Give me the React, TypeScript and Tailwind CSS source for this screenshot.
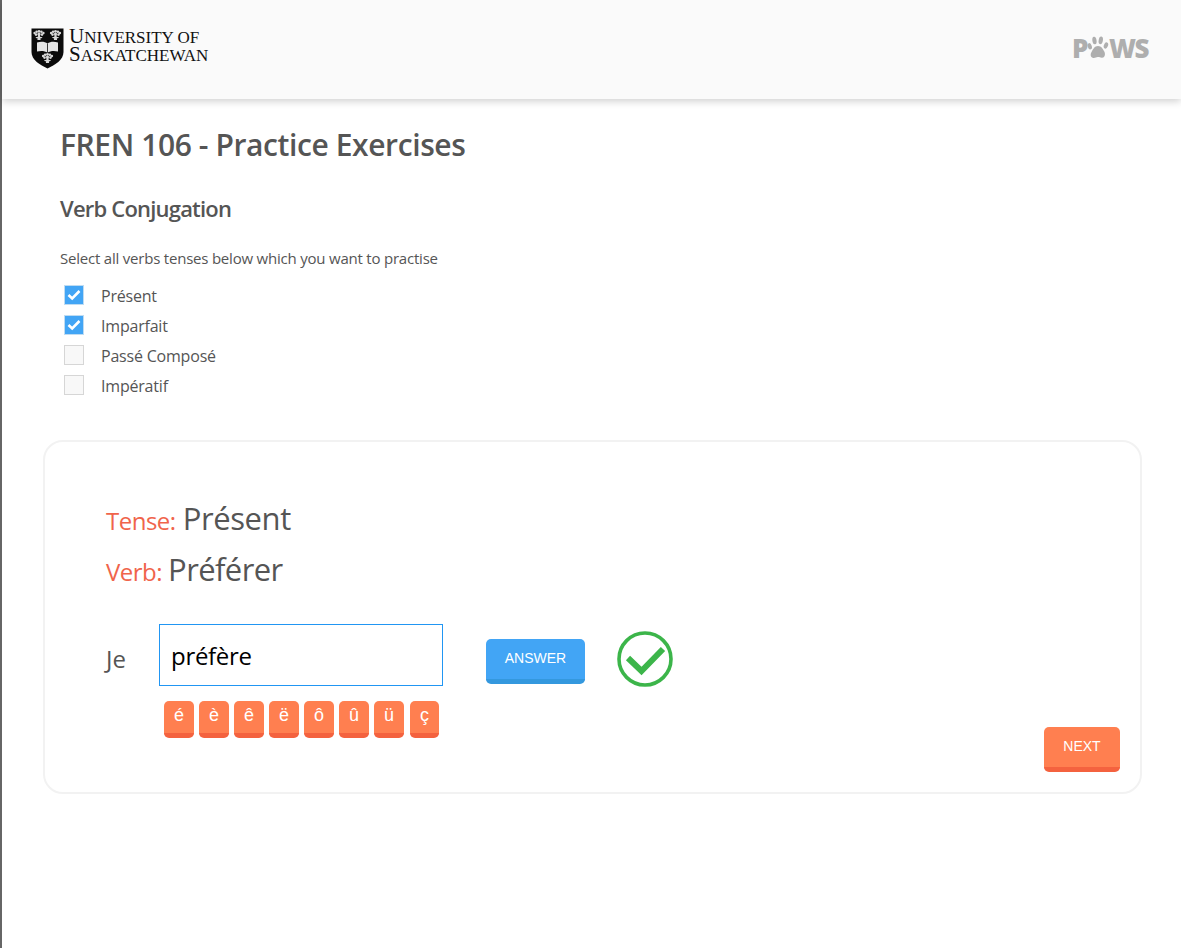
const tenses = [
  { label: "Présent", checked: true },
  { label: "Imparfait", checked: true },
  { label: "Passé Composé", checked: false },
  { label: "Impératif", checked: false },
];

const accents = ["é", "è", "ê", "ë", "ô", "û", "ü", "ç"];

function Wheat({ x, y }: { x: number; y: number }) {
  return (
    <g transform={`translate(${x} ${y})`} fill="#d8d8d8">
      <path d="M-1 1 L1 1 L1.6 6 L-1.6 6 Z" />
      <circle cx="-4.4" cy="-1" r="1.2" />
      <circle cx="-2.4" cy="-2.2" r="1.3" />
      <circle cx="0" cy="-2.7" r="1.4" />
      <circle cx="2.4" cy="-2.2" r="1.3" />
      <circle cx="4.4" cy="-1" r="1.2" />
      <circle cx="-3" cy="0.6" r="1.3" />
      <circle cx="0" cy="0" r="1.6" />
      <circle cx="3" cy="0.6" r="1.3" />
      <path d="M-3.5 3 L3.5 3 L2.5 4.2 L-2.5 4.2 Z" />
    </g>
  );
}

function Crest() {
  return (
    <svg width="33" height="41" viewBox="0 0 33 41">
      <path d="M0.5 0.5 H32.5 V24 C32.5 32 24 37 16.5 40.5 C9 37 0.5 32 0.5 24 Z" fill="#0b0b0b" />
      <Wheat x={8} y={6} />
      <Wheat x={24.5} y={6} />
      <Wheat x={16.5} y={29} />
      <path d="M6 14.5 C10 13 14 13.5 16.5 15.5 C19 13.5 23 13 27 14.5 V23.5 C23 22.5 19 23 16.5 24.5 C14 23 10 22.5 6 23.5 Z" fill="#e4e4e4" />
      <path d="M16.5 15.5 V24.5" stroke="#0b0b0b" strokeWidth="0.8" />
    </svg>
  );
}

function Paw() {
  return (
    <svg width="22" height="25" viewBox="0 0 23 25" fill="#aeaeae" className="mt-[-1px]">
      <path d="M11.5 11 C15 11 16.6 14 18.2 17 C19.6 20 18.4 23.6 15.4 23.2 C13.6 23 12.8 22.2 11.2 22.4 C9.4 22.6 8.2 24 5.8 23.2 C3.4 22.2 3.4 19 5 16.6 C6.6 14.2 8 11 11.5 11 Z" />
      <ellipse cx="2.9" cy="11.2" rx="2.1" ry="3.4" transform="rotate(-18 2.9 11.2)" />
      <ellipse cx="7.8" cy="5.2" rx="2.2" ry="4" transform="rotate(-8 7.8 5.2)" />
      <ellipse cx="14.4" cy="5" rx="2.2" ry="4" transform="rotate(10 14.4 5)" />
      <ellipse cx="19.8" cy="10.4" rx="2.1" ry="3.4" transform="rotate(22 19.8 10.4)" />
    </svg>
  );
}

export default function App() {
  return (
    <div className="min-h-[948px] bg-white border-l-2 border-[#666] font-['Open_Sans',sans-serif] text-[#555]">
      {/* Header */}
      <header className="h-[99px] bg-[#fafafa] shadow-[0_2px_8px_rgba(0,0,0,0.2)] flex items-center justify-between pl-[29px] pr-[33px]">
        <div className="flex items-center gap-[5px] mt-[-3px]">
          <Crest />
          <div className="font-['Liberation_Serif',serif] text-[#111] leading-[18px] text-[17px] uppercase mt-[-7px]">
            <div className="h-[18px]"><span className="text-[21px]">U</span>niversity of</div>
            <div className="h-[18px]"><span className="text-[21px]">S</span>askatchewan</div>
          </div>
        </div>
        <div className="flex items-center font-['Open_Sans',sans-serif] font-extrabold text-[26px] leading-[30px] text-[#aeaeae] tracking-[-1.5px] mt-[-3px]">
          <span>P</span>
          <Paw />
          <span>WS</span>
        </div>
      </header>

      <main className="pt-[26px]">
        <div className="pl-[58px]">
          <h1 className="text-[30px] leading-[40px] font-semibold tracking-[-0.4px]">FREN 106 - Practice Exercises</h1>
          <h2 className="mt-[28px] text-[22px] leading-[30px] font-semibold tracking-[-0.8px]">Verb Conjugation</h2>
          <p className="mt-[25px] text-[15px] leading-[20px] tracking-[-0.21px]">Select all verbs tenses below which you want to practise</p>
          <div className="mt-[18px] flex flex-col gap-[10px] pl-[4px]">
            {tenses.map((t) => (
              <label key={t.label} className="flex items-center h-[20px] gap-[17px] text-[16px] tracking-[-0.2px]">
                <span className={t.checked ? "w-[20px] h-[20px] mt-[-2px] bg-[#42a5f5] border border-[#bfdcf2] flex items-center justify-center" : "w-[20px] h-[20px] mt-[-2px] bg-[#f8f8f8] border border-[#d6d6d6]"}>
                  {t.checked && (
                    <svg width="14" height="12" viewBox="0 0 14 12" fill="none" stroke="#fff" strokeWidth="2.6">
                      <path d="M1.5 6 L5.2 9.5 L12.5 2" />
                    </svg>
                  )}
                </span>
                {t.label}
              </label>
            ))}
          </div>
        </div>

        {/* Exercise card */}
        <section className="relative ml-[41px] mt-[44px] w-[1099px] h-[354px] rounded-[20px] border-2 border-[#f2f2f2] pl-[61px] pt-[53px]">
          <div className="flex items-baseline gap-[7px] h-[44px]">
            <span className="text-[24px] text-[#f0644b] tracking-[-0.5px]">Tense:</span>
            <span className="text-[31px] tracking-[-0.4px]">Présent</span>
          </div>
          <div className="flex items-baseline gap-[6px] h-[44px] mt-[7px]">
            <span className="text-[24px] text-[#f0644b] tracking-[-0.5px]">Verb:</span>
            <span className="text-[31px] tracking-[-0.6px]">Préférer</span>
          </div>
          <div className="mt-[32px] flex items-center">
            <span className="w-[53px] text-[24px] mt-[8px]">Je</span>
            <input
              readOnly
              value="préfère"
              className="w-[284px] h-[62px] border border-[#2196f3] px-[11px] text-[24px] tracking-[-0.3px] text-black outline-none bg-white"
            />
            <button className="ml-[43px] mt-[12px] w-[99px] h-[45px] rounded-[5px] bg-[#42a5f5] border-b-[5px] border-[#3498de] text-white text-[14px] font-['Liberation_Sans',sans-serif]">ANSWER</button>
            <svg className="ml-[31px] mt-[8px]" width="58" height="58" viewBox="0 0 58 58" fill="none" stroke="#3cb54a">
              <circle cx="29" cy="29" r="26" strokeWidth="3.6" />
              <path d="M12 28 L25.5 41 L47 19" strokeWidth="6" />
            </svg>
          </div>
          <div className="mt-[13px] ml-[58px] flex gap-[5px]">
            {accents.map((a) => (
              <button key={a} className="w-[30px] h-[37px] last:w-[29px] last:ml-[1px] rounded-[5px] bg-[#ff7f50] border-b-[5px] border-[#f4623f] pb-[3px] text-white text-[18px] font-['Liberation_Sans',sans-serif]">{a}</button>
            ))}
          </div>
          <button className="absolute right-[20px] bottom-[20px] w-[76px] h-[45px] rounded-[5px] bg-[#ff7f50] border-b-[5px] border-[#f4623f] pb-[2px] text-white text-[14px] font-['Liberation_Sans',sans-serif]">NEXT</button>
        </section>
      </main>
    </div>
  );
}
